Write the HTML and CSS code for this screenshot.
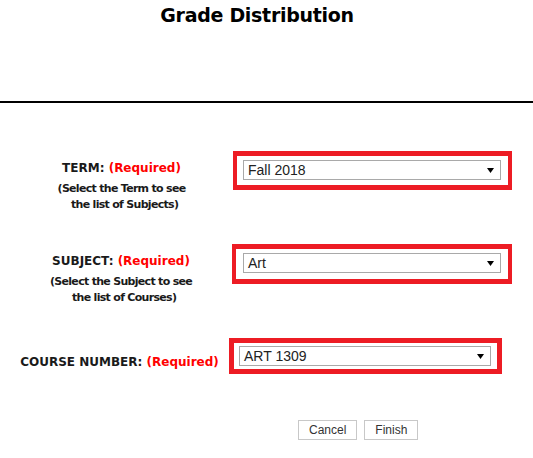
FILE: index.html
```html
<!DOCTYPE html>
<html>
<head>
<meta charset="utf-8">
<link rel="stylesheet" href="styles.css">
</head>
<body>
<header class="header">
  <h1 class="title">Grade Distribution</h1>
</header>
<div class="rule"></div>
<main class="form">
  <div class="row row-term">
    <div class="label label-term">
      <div class="label-main">TERM: <span class="req">(Required)</span></div>
      <div class="label-sub">(Select the Term to see<br>&nbsp;&nbsp;the list of Subjects)</div>
    </div>
    <div class="box box-term">
      <div class="select"><span class="select-text">Fall 2018</span><svg class="arrow" width="7" height="5" viewBox="0 0 7 5"><path d="M0 0H7L3.5 5Z" fill="#000"/></svg></div>
    </div>
  </div>
  <div class="row row-subject">
    <div class="label label-subject">
      <div class="label-main">SUBJECT: <span class="req">(Required)</span></div>
      <div class="label-sub">(Select the Subject to see<br>&nbsp;&nbsp;the list of Courses)</div>
    </div>
    <div class="box box-subject">
      <div class="select"><span class="select-text">Art</span><svg class="arrow" width="7" height="5" viewBox="0 0 7 5"><path d="M0 0H7L3.5 5Z" fill="#000"/></svg></div>
    </div>
  </div>
  <div class="row row-course">
    <div class="label label-course">
      <div class="label-main">COURSE NUMBER: <span class="req">(Required)</span></div>
    </div>
    <div class="box box-course">
      <div class="select select-course"><span class="select-text">ART 1309</span><svg class="arrow" width="7" height="5" viewBox="0 0 7 5"><path d="M0 0H7L3.5 5Z" fill="#000"/></svg></div>
    </div>
  </div>
  <div class="actions">
    <button class="btn" type="button">Cancel</button>
    <button class="btn" type="button">Finish</button>
  </div>
</main>
</body>
</html>
```
FILE: styles.css
```css
html, body {
  margin: 0;
  padding: 0;
  background: #fff;
}
body {
  width: 533px;
  font-family: "DejaVu Sans", Verdana, sans-serif;
  color: #111;
}
.header {
  height: 101px;
}
.title {
  margin: 0;
  padding-top: 3px;
  padding-right: 19px;
  font-size: 19px;
  line-height: 24px;
  letter-spacing: -0.3px;
  font-weight: bold;
  text-align: center;
  color: #000;
}
.rule {
  border-top: 2px solid #000;
}
.form {
  display: flex;
  flex-direction: column;
}
.row {
  display: flex;
  align-items: flex-start;
}
.row-term { margin-top: 48px; }
.row-subject { margin-top: 31px; }
.row-course { margin-top: 32px; }
.label {
  padding-left: 10px;
  text-align: center;
  font-weight: bold;
  flex: none;
}
.label-term { width: 223px; padding-top: 9px; }
.label-subject { width: 222px; padding-top: 9px; }
.label-course { width: 219px; padding-top: 16px; }
.label-main {
  font-size: 12px;
  line-height: 16px;
  color: #1a1a1a;
}
.req {
  color: #ff0000;
}
.label-sub {
  margin-top: 5px;
  font-size: 11px;
  line-height: 16px;
  letter-spacing: -0.7px;
  color: #1a1a1a;
}
.box {
  border-color: #ed1c24;
  border-style: solid;
  border-width: 5px 4px;
  padding: 4px 7px 5px 6px;
  background: #fff;
}
.box-subject {
  padding-left: 7px;
  padding-bottom: 6px;
}
.box-course {
  border-width: 5px;
  padding: 3px 6px 3px 5px;
}
.select {
  box-sizing: border-box;
  width: 258px;
  height: 20px;
  border: 1px solid #a9a9a9;
  background: #fff;
  display: flex;
  align-items: center;
  justify-content: space-between;
  padding: 0 6px 0 4px;
  font-family: "Liberation Sans", Arial, sans-serif;
  font-size: 14px;
  color: #222;
}
.select-course {
  width: 252px;
}
.select-text {
  line-height: 18px;
}
.arrow {
  display: block;
  margin-top: 1px;
}
.actions {
  margin-top: 46px;
  padding-left: 298px;
  display: flex;
  gap: 7px;
}
.btn {
  box-sizing: border-box;
  height: 20px;
  padding: 0 10px;
  border: 1px solid #c8c8c8;
  background: #fff;
  font-family: "Liberation Sans", Arial, sans-serif;
  font-size: 12px;
  color: #333;
  line-height: 18px;
  border-radius: 0;
}
```
